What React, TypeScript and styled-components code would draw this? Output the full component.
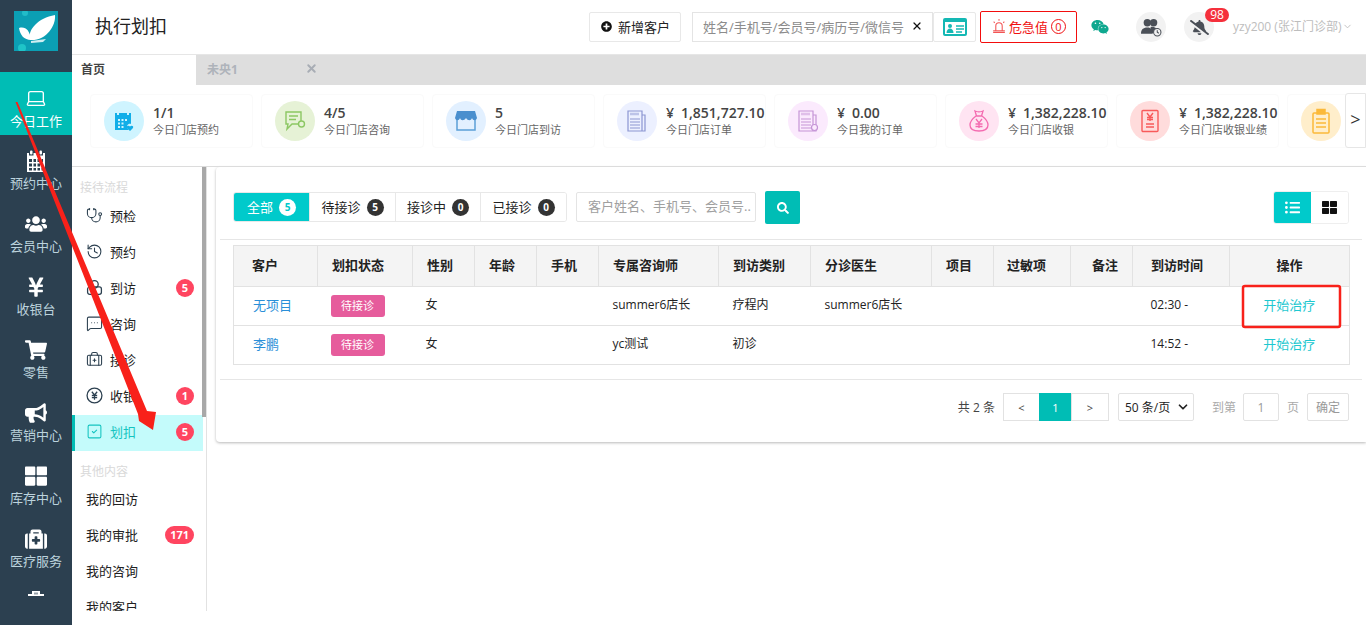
import { ReactNode } from 'react';
import styled, { createGlobalStyle } from 'styled-components';
import {
  FaBullhorn,
  FaMedkit,
  FaPlusCircle,
  FaSearch,
  FaShoppingCart,
  FaThLarge,
  FaUsers,
  FaWeixin,
  FaYenSign,
  FaBellSlash,
  FaListUl,
} from 'react-icons/fa';
import {
  BriefcaseMedical,
  ChevronDown,
  History,
  Laptop,
  MessageSquareMore,
  SquareCheck,
  Stethoscope,
  X,
} from 'lucide-react';

const GlobalStyle = createGlobalStyle`
  html, body {
    margin: 0;
    padding: 0;
    background: #fff;
    font-family: "Open Sans", "Noto Sans CJK SC", sans-serif;
    color: #222;
  }
  * {
    box-sizing: border-box;
  }
`;

const Page = styled.div`
  position: relative;
  display: flex;
  width: 1366px;
  height: 625px;
  overflow: hidden;
`;

const SideNav = styled.nav`
  width: 72px;
  height: 625px;
  flex: none;
  background: #2c4050;
  overflow: hidden;
`;

const LogoBox = styled.div`
  height: 72px;
  padding: 11px 14px 0;
  svg {
    display: block;
  }
`;

const NavItem = styled.div<{ $active?: boolean }>`
  height: 63px;
  display: flex;
  flex-direction: column;
  align-items: center;
  padding-top: 15px;
  background: ${(p) => (p.$active ? '#00bdb5' : 'transparent')};
  color: #fff;
  span {
    margin-top: ${(p) => (p.$active ? 3 : 2)}px;
    font-size: 13px;
    line-height: 18px;
    color: ${(p) => (p.$active ? '#fff' : '#bcd3dd')};
  }
  svg {
    display: block;
    width: 22px;
    height: 22px;
  }
`;

const NavClipped = styled.div`
  height: 10px;
  margin-top: 15px;
  display: flex;
  justify-content: center;
  overflow: hidden;
`;

const Right = styled.div`
  width: 1294px;
  display: flex;
  flex-direction: column;
`;

const Header = styled.header`
  height: 55px;
  display: flex;
  align-items: center;
  border-bottom: 1px solid #e6e6e6;
`;

const Title = styled.h1`
  margin: 0 0 4px 23px;
  width: 494px;
  font-size: 18px;
  font-weight: 400;
  color: #222;
`;

const AddButton = styled.div`
  width: 92px;
  height: 30px;
  display: flex;
  align-items: center;
  padding: 0 0 2px 11px;
  gap: 6px;
  border: 1px solid #e8e8e8;
  border-radius: 2px;
  font-size: 13px;
  color: #222;
`;

const SearchBox = styled.div`
  width: 241px;
  height: 30px;
  margin-left: 11px;
  padding: 0 9px 2px 10px;
  display: flex;
  align-items: center;
  justify-content: space-between;
  border: 1px solid #e4e4e4;
  font-size: 13px;
  color: #8c8c8c;
  svg {
    color: #111;
  }
`;

const CardButton = styled.div`
  width: 43px;
  height: 30px;
  margin-bottom: 1px;
  display: flex;
  align-items: center;
  justify-content: center;
  border: 1px solid #e8e8e8;
  border-radius: 2px;
`;

const AlarmButton = styled.div`
  width: 97px;
  height: 32px;
  margin-left: 4px;
  padding-bottom: 2px;
  display: flex;
  align-items: center;
  justify-content: center;
  gap: 2px;
  border: 1px solid #f30d0d;
  border-radius: 2px;
  font-size: 13px;
  color: #f01010;
  b {
    width: 15px;
    height: 15px;
    margin-left: 1px;
    border: 1px solid #f01010;
    border-radius: 50%;
    font-size: 11px;
    line-height: 13px;
    font-weight: 400;
    text-align: center;
  }
`;

const WechatIcon = styled(FaWeixin)`
  margin-left: 14px;
  width: 18px;
  height: 18px;
  color: #0fa88f;
`;

const RoundIcon = styled.div<{ $gap: number }>`
  position: relative;
  width: 30px;
  height: 30px;
  margin-left: ${(p) => p.$gap}px;
  border-radius: 50%;
  background: #f2f2f2;
  color: #4a4f57;
  display: flex;
  align-items: center;
  justify-content: center;
`;

const CountBadge = styled.span`
  position: absolute;
  left: 21px;
  top: -4px;
  width: 24px;
  height: 14px;
  border-radius: 7px;
  background: #f5303c;
  color: #fff;
  font-size: 12px;
  line-height: 14px;
  text-align: center;
`;

const UserName = styled.div`
  margin-left: 19px;
  padding-bottom: 2px;
  display: flex;
  align-items: center;
  gap: 1px;
  font-size: 12px;
  color: #bdbdbd;
  white-space: nowrap;
`;

const TabBar = styled.div`
  height: 30px;
  display: flex;
  background: #dedede;
  font-size: 12px;
  font-weight: 700;
`;

const Tab = styled.div<{ $current?: boolean }>`
  width: ${(p) => (p.$current ? 124 : 128)}px;
  padding: 0 0 3px ${(p) => (p.$current ? 9 : 11)}px;
  display: flex;
  align-items: center;
  justify-content: space-between;
  background: ${(p) => (p.$current ? '#fff' : 'transparent')};
  color: ${(p) => (p.$current ? '#444' : '#aeb3ba')};
  svg {
    color: #a8adb5;
    margin-right: 6px;
  }
`;

const StatRow = styled.div`
  position: relative;
  height: 82px;
  padding: 9px 0 0 18px;
  display: flex;
  border-bottom: 1px solid #dcdcdc;
  overflow: hidden;
`;

const StatCard = styled.div`
  width: 163px;
  height: 54px;
  margin-right: 8px;
  flex: none;
  padding: 6px 0 0 13px;
  display: flex;
  border: 1px solid #fafafa;
  border-radius: 4px;
`;

const StatCircle = styled.div<{ $bg: string }>`
  width: 40px;
  height: 40px;
  flex: none;
  display: flex;
  align-items: center;
  justify-content: center;
  border-radius: 50%;
  background: ${(p) => p.$bg};
`;

const StatText = styled.div`
  margin-left: 9px;
  padding-top: 3px;
  white-space: nowrap;
`;

const StatValue = styled.div`
  font-size: 14px;
  line-height: 18px;
  font-weight: 600;
  color: #444;
`;

const StatLabel = styled.div`
  padding-top: 1px;
  font-size: 11px;
  line-height: 14px;
  color: #666;
`;

const NextButton = styled.div`
  position: absolute;
  right: 0;
  top: 8px;
  width: 21px;
  height: 55px;
  padding-bottom: 3px;
  display: flex;
  align-items: center;
  justify-content: center;
  background: #fff;
  border: 1px solid #e6e6e6;
  border-radius: 3px 0 0 3px;
  font-size: 18px;
  color: #333;
`;

const Body = styled.div`
  display: flex;
`;

const Panel = styled.aside`
  position: relative;
  width: 135px;
  height: 444px;
  flex: none;
  padding-top: 12px;
  border-right: 1px solid #e2e2e2;
  overflow: hidden;
`;

const PanelThumb = styled.div`
  position: absolute;
  right: 0;
  top: 0;
  width: 4px;
  height: 250px;
  background: #a8a8a8;
`;

const GroupLabel = styled.div<{ $gap?: number }>`
  height: 18px;
  margin-top: ${(p) => p.$gap ?? 0}px;
  margin-bottom: ${(p) => (p.$gap ? 1 : 2)}px;
  padding-left: 8px;
  font-size: 12px;
  line-height: 18px;
  color: #d9d9d9;
`;

const MenuItem = styled.div<{ $active?: boolean }>`
  width: 131px;
  height: 36px;
  display: flex;
  align-items: center;
  padding: 0 9px 3px ${(p) => (p.$active ? 11 : 14)}px;
  border-left: ${(p) => (p.$active ? '3px solid #00bdb5' : 'none')};
  background: ${(p) => (p.$active ? '#c4fbfb' : 'transparent')};
  color: ${(p) => (p.$active ? '#14c4c0' : '#222')};
  font-size: 13px;
  svg {
    flex: none;
    width: 17px;
    height: 17px;
    margin-right: 7px;
    color: ${(p) => (p.$active ? '#14c4c0' : '#2c4050')};
  }
`;

const MenuText = styled.span`
  flex: 1;
`;

const PlainMenuItem = styled(MenuItem)`
  padding-left: 14px;
`;

const RedBadge = styled.span`
  min-width: 18px;
  height: 18px;
  padding: 0 5px;
  border-radius: 9px;
  background: #ff4560;
  color: #fff;
  font-size: 11px;
  line-height: 18px;
  font-weight: 700;
  text-align: center;
`;

const Card = styled.main`
  width: 1150px;
  height: 275px;
  margin-left: 9px;
  border-radius: 4px 0 0 4px;
  box-shadow: 0 1px 3px rgba(0, 0, 0, 0.28);
`;

const Toolbar = styled.div`
  height: 73px;
  margin: 0 4px;
  padding: 25px 13px 0;
  display: flex;
  align-items: flex-start;
  border-bottom: 1px solid #e6e6e6;
`;

const FilterGroup = styled.div`
  display: flex;
  height: 30px;
  border: 1px solid #e8e8e8;
  border-radius: 3px;
  overflow: hidden;
`;

const FilterTab = styled.div<{ $on?: boolean; $width: number }>`
  width: ${(p) => p.$width}px;
  padding-bottom: 2px;
  display: flex;
  align-items: center;
  justify-content: center;
  gap: 6px;
  font-size: 13px;
  background: ${(p) => (p.$on ? '#00cacb' : '#fff')};
  color: ${(p) => (p.$on ? '#fff' : '#222')};
  border-right: 1px solid #e8e8e8;
  &:last-child {
    border-right: none;
  }
  b {
    width: 17px;
    height: 17px;
    margin-top: 2px;
    border-radius: 50%;
    background: ${(p) => (p.$on ? '#fff' : '#333')};
    color: ${(p) => (p.$on ? '#00cacb' : '#fff')};
    font-size: 10px;
    line-height: 17px;
    text-align: center;
  }
`;

const SearchInput = styled.div`
  width: 180px;
  height: 30px;
  margin-left: 9px;
  padding-left: 11px;
  border: 1px solid #e4e4e4;
  border-radius: 2px;
  font-size: 13px;
  line-height: 26px;
  color: #a0a0a0;
  white-space: nowrap;
  overflow: hidden;
`;

const SearchButton = styled.div`
  width: 35px;
  height: 33px;
  margin: -1px 0 0 9px;
  display: flex;
  align-items: center;
  justify-content: center;
  background: #00bdb5;
  border-radius: 2px;
  color: #fff;
`;

const ViewToggle = styled.div`
  margin-left: auto;
  margin-top: -1px;
  display: flex;
  height: 33px;
  border: 1px solid #eee;
  border-radius: 3px;
  overflow: hidden;
`;

const ViewButton = styled.div<{ $on?: boolean }>`
  width: 37px;
  display: flex;
  align-items: center;
  justify-content: center;
  background: ${(p) => (p.$on ? '#00cacb' : '#fff')};
  color: ${(p) => (p.$on ? '#fff' : '#111')};
`;

const TableWrap = styled.div`
  margin: 5px 17px 0;
`;

const Table = styled.table`
  width: 1116px;
  table-layout: fixed;
  border-collapse: collapse;
  border: 1px solid #e2e2e2;
`;

const Th = styled.th<{ $pad?: number; $align?: string }>`
  height: 41px;
  padding: 0 ${(p) => (p.$align === 'right' ? 14 : 0)}px 4px ${(p) => p.$pad ?? 14}px;
  background: #f4f4f4;
  border-right: 1px solid #e2e2e2;
  border-bottom: 1px solid #e2e2e2;
  font-size: 13px;
  font-weight: 700;
  color: #222;
  text-align: ${(p) => p.$align ?? 'left'};
  &:last-child {
    padding: 0 0 4px;
    border-right: none;
  }
`;

const Td = styled.td<{ $pad?: number }>`
  height: 39px;
  padding: 0 0 4px ${(p) => p.$pad ?? 14}px;
  border-bottom: 1px solid #e2e2e2;
  font-size: 12px;
  color: #222;
  white-space: nowrap;
  tr:last-child & {
    border-bottom: none;
  }
`;

const TagCell = styled(Td)`
  padding-bottom: 1px;
`;

const NameLink = styled.span`
  font-size: 13px;
  color: #2a8fd8;
`;

const StatusTag = styled.span`
  display: block;
  width: 54px;
  height: 22px;
  border-radius: 3px;
  background: #e65c9c;
  color: #fff;
  font-size: 11px;
  line-height: 21px;
  text-align: center;
`;

const ActionLink = styled.div`
  font-size: 13px;
  color: #1ec8d0;
  text-align: center;
`;

const Pagination = styled.div`
  margin: 14px 4px 0;
  padding: 13px 13px 0 0;
  display: flex;
  justify-content: flex-end;
  align-items: center;
  border-top: 1px solid #e6e6e6;
  font-size: 12px;
  color: #444;
`;

const Total = styled.span`
  margin-right: 9px;
`;

const PageButton = styled.div<{ $on?: boolean; $width: number }>`
  width: ${(p) => p.$width}px;
  height: 28px;
  display: flex;
  align-items: center;
  justify-content: center;
  margin-left: -1px;
  font-size: 11px;
  background: ${(p) => (p.$on ? '#00bdb5' : '#fff')};
  color: ${(p) => (p.$on ? '#fff' : '#444')};
  border: 1px solid ${(p) => (p.$on ? '#00bdb5' : '#e2e2e2')};
`;

const SizeSelect = styled.div`
  width: 76px;
  height: 28px;
  margin: 0 18px 0 9px;
  padding: 0 3px 0 6px;
  display: flex;
  align-items: center;
  justify-content: space-between;
  border: 1px solid #e2e2e2;
  border-radius: 2px;
  color: #222;
`;

const MutedText = styled.span<{ $left?: number; $right: number }>`
  margin: 0 ${(p) => p.$right}px 0 ${(p) => p.$left ?? 0}px;
  color: #aaa;
`;

const JumpBox = styled.div<{ $width: number }>`
  width: ${(p) => p.$width}px;
  height: 28px;
  display: flex;
  align-items: center;
  justify-content: center;
  border: 1px solid #e2e2e2;
  border-radius: 2px;
  color: #999;
`;

const Annotation = styled.svg`
  position: absolute;
  left: 0;
  top: 0;
  pointer-events: none;
`;

const Calendar = () => (
  <svg viewBox="0 0 22 22" fill="#fff">
    <rect x="5" y="0.5" width="2.5" height="4" rx="1" />
    <rect x="14.5" y="0.5" width="2.5" height="4" rx="1" />
    <path
      fillRule="evenodd"
      d="M2 3h2v2.500h4.500V3h5v2.500H18V3h2v19H2zM4 9v3h3V9zm4.500 0v3H11V9zm4 0v3H15V9zm4 0v3h1.500V9zM4 13.500v3h3v-3zm4.500 0v3H11v-3zm4 0v3H15v-3zm4 0v3h1.500v-3zM4 18v2.500h3V18zm4.500 0v2.500H11V18zm4 0v2.500H15V18zm4 0v2.500h1.500V18z"
    />
  </svg>
);

const LogoMark = () => (
  <svg width="44" height="40" viewBox="0 0 44 40">
    <rect width="44" height="40" fill="#0b9fb4" />
    <circle cx="11" cy="2" r="3" fill="#22bcc8" />
    <circle cx="8" cy="37" r="4" fill="#1fc4c8" />
    <path d="M16 29C13 19 24 7 41 4c1 11-9 26-25 25z" fill="#fff" />
    <path d="M5 17c6-2 11 2 12 12-7 0-11-5-12-12z" fill="#fff" />
    <path d="M17 30l15-2-3 3-12 1z" fill="#cfeef2" />
  </svg>
);

const VisitIcon = () => (
  <svg viewBox="0 0 16 16" fill="none" stroke="currentColor" strokeWidth="1.2">
    <circle cx="8" cy="5" r="3.500" />
    <rect x="1.500" y="7.500" width="13" height="7" rx="2" />
  </svg>
);

const CashIcon = () => (
  <svg viewBox="0 0 16 16" fill="none" stroke="currentColor" strokeWidth="1.2">
    <circle cx="8" cy="8" r="7" />
    <path d="M5.500 4.500 8 7.500l2.500-3M8 7.500V12M5.500 8h5M5.500 10h5" />
  </svg>
);

const IdCardIcon = () => (
  <svg width="24" height="18" viewBox="0 0 24 18">
    <rect x="1" y="1" width="22" height="16" rx="1" fill="none" stroke="#14b8b4" strokeWidth="2" />
    <rect x="1" y="1" width="22" height="3" fill="#14b8b4" />
    <circle cx="7" cy="8" r="2" fill="#14b8b4" />
    <path d="M3.500 15c0-6 7-6 7 0z" fill="#14b8b4" />
    <path d="M13 8h8M13 11h8M13 14h6" stroke="#14b8b4" strokeWidth="1.300" />
  </svg>
);

const SirenIcon = () => (
  <svg width="16" height="16" viewBox="0 0 15 15" fill="none" stroke="#f25555" strokeWidth="1">
    <path d="M4.500 12V7.500a3 3 0 0 1 6 0V12M2 13.500h11M7.500 1v1.500M2.500 3.500l1 1M12.500 3.500l-1 1M2 12h11" />
  </svg>
);

const PeopleClock = () => (
  <svg width="21" height="19" viewBox="0 0 20 18" fill="#4a4f57">
    <circle cx="6" cy="4.500" r="3.500" />
    <circle cx="12" cy="4.500" r="3.500" />
    <path d="M0 15c0-4 2-6 6-6s5 2 5 6zM9 8.500c3-.5 6 .5 6.500 3.500-2.500 0-4 1-4.500 3H10c0-2.500-.5-5-1-6.500z" />
    <circle cx="15.500" cy="13.500" r="3.500" fill="#f2f2f2" stroke="#4a4f57" />
    <path d="M15.500 11.500v2l1.500 1" stroke="#4a4f57" fill="none" />
  </svg>
);

const CalendarHeart = () => (
  <svg width="22" height="22" viewBox="0 0 22 22">
    <path
      fill="#12aee8"
      fillRule="evenodd"
      d="M2 3h2v2h2V3h8v2h2V3h2v11c-3-1-5 2-3 5l1 1H2zm3 6v2h2V9zm3.500 0v2h2V9zm3.500 0v2h2V9zm-7 3.500v2h2v-2zm3.500 0v2h2v-2zM5 16v2h2v-2zm3.500 0v2h2v-2z"
    />
    <path fill="#12aee8" d="M17 21l-3-3c-1-2 1.500-3 3-1.500 1.500-1.500 4-.5 3 1.500z" />
  </svg>
);

const ChatIcon = () => (
  <svg width="24" height="22" viewBox="0 0 24 22" fill="none" stroke="#8cc763" strokeWidth="1.400">
    <path d="M15 14H9l-5 5 1-5H3V2h15v9" />
    <path d="M6 6h9M6 9.500h7" />
    <circle cx="18.500" cy="14" r="3" />
  </svg>
);

const ShopIcon = () => (
  <svg width="24" height="22" viewBox="0 0 24 22">
    <path d="M3 9v11h18V9" fill="none" stroke="#5b9fd8" strokeWidth="1.500" />
    <path d="M3 1h18l2 7c-1 3-4 3-5 0-1 3-4 3-6 0-2 3-5 3-6 0-1 3-4 3-5 0z" fill="#4a8fce" />
  </svg>
);

const NewsIcon = ({ color, badge }: { color: string; badge?: boolean }) => (
  <svg width="24" height="24" viewBox="0 0 24 24" fill="none" stroke={color} strokeWidth="1.200">
    <path d="M3 2h14v20H3zM17 6h3v16h-3" />
    <path d="M5 10h10M5 13h10M5 16h10M5 19h10" />
    <path d="M5 5h9" strokeWidth="2.500" opacity="0.5" />
    {badge && <circle cx="18.500" cy="18.500" r="3" fill="#fbeafd" />}
  </svg>
);

const MoneyBag = () => (
  <svg width="24" height="24" viewBox="0 0 24 24" fill="none" stroke="#f46bb0" strokeWidth="1.300">
    <path d="M8 2c2 1 6 1 8 0l-1.500 5h-5zM9 7C5 10 3 13 3 16c0 4 4 6 9 6s9-2 9-6c0-3-2-6-6-9" />
    <path d="M9 10l3 4 3-4M12 14v5M8.500 15h7M8.500 17.500h7" />
  </svg>
);

const ReceiptIcon = () => (
  <svg width="22" height="24" viewBox="0 0 22 24" fill="none" stroke="#f85a5a" strokeWidth="1.400">
    <rect x="3" y="1.500" width="16" height="21" rx="1" />
    <path d="M8 4l3 4 3-4M11 8v4M8 8.500h6M8 10.500h6M7 15h8M7 18h8" />
  </svg>
);

const ClipboardIcon = () => (
  <svg width="22" height="26" viewBox="0 0 22 26" fill="none" stroke="#fbb93a" strokeWidth="1.500">
    <rect x="3" y="5" width="16" height="20" rx="1" />
    <path d="M7 1.500h8V6H7z" fill="#fbb93a" />
    <path d="M6 11h10M6 15h10M6 19h10" />
  </svg>
);

const StatItem = ({ bg, icon, value, label }: { bg: string; icon: ReactNode; value: string; label: string }) => (
  <StatCard>
    <StatCircle $bg={bg}>{icon}</StatCircle>
    <StatText>
      <StatValue>{value}</StatValue>
      <StatLabel>{label}</StatLabel>
    </StatText>
  </StatCard>
);

const columns = [84, 95, 62, 62, 62, 120, 92, 121, 62, 77, 62, 97, 120];

const App = () => (
  <Page>
    <GlobalStyle />
    <SideNav>
      <LogoBox>
        <LogoMark />
      </LogoBox>
      <NavItem $active>
        <Laptop strokeWidth={1.5} />
        <span>今日工作</span>
      </NavItem>
      <NavItem>
        <Calendar />
        <span>预约中心</span>
      </NavItem>
      <NavItem>
        <FaUsers />
        <span>会员中心</span>
      </NavItem>
      <NavItem>
        <FaYenSign />
        <span>收银台</span>
      </NavItem>
      <NavItem>
        <FaShoppingCart />
        <span>零售</span>
      </NavItem>
      <NavItem>
        <FaBullhorn />
        <span>营销中心</span>
      </NavItem>
      <NavItem>
        <FaThLarge />
        <span>库存中心</span>
      </NavItem>
      <NavItem>
        <FaMedkit />
        <span>医疗服务</span>
      </NavItem>
      <NavClipped>
        <svg width="18" height="10" viewBox="0 0 18 10" fill="#fff">
          <path d="M5 0h8v3h4v2H1V3h4zM7.500 1.500v2h1v-2zm2 0v2h1v-2z" fillRule="evenodd" />
        </svg>
      </NavClipped>
    </SideNav>

    <Right>
      <Header>
        <Title>执行划扣</Title>
        <AddButton>
          <FaPlusCircle size={11} color="#111" />
          新增客户
        </AddButton>
        <SearchBox>
          姓名/手机号/会员号/病历号/微信号
          <X size={12} strokeWidth={2.5} />
        </SearchBox>
        <CardButton>
          <IdCardIcon />
        </CardButton>
        <AlarmButton>
          <SirenIcon />
          危急值
          <b>0</b>
        </AlarmButton>
        <WechatIcon />
        <RoundIcon $gap={27}>
          <PeopleClock />
        </RoundIcon>
        <RoundIcon $gap={18}>
          <FaBellSlash size={19} />
          <CountBadge>98</CountBadge>
        </RoundIcon>
        <UserName>
          yzy200 (张江门诊部)
          <ChevronDown size={11} />
        </UserName>
      </Header>

      <TabBar>
        <Tab $current>首页</Tab>
        <Tab>
          未央1
          <X size={13} strokeWidth={3.5} />
        </Tab>
      </TabBar>

      <StatRow>
        <StatItem bg="#cff4ff" icon={<CalendarHeart />} value="1/1" label="今日门店预约" />
        <StatItem bg="#e6f2d6" icon={<ChatIcon />} value="4/5" label="今日门店咨询" />
        <StatItem bg="#e2f0ff" icon={<ShopIcon />} value="5" label="今日门店到访" />
        <StatItem bg="#ecf0ff" icon={<NewsIcon color="#8c96d2" />} value={'¥\u20021,851,727.10'} label="今日门店订单" />
        <StatItem bg="#fbeafd" icon={<NewsIcon color="#c594d6" badge />} value={'¥\u20020.00'} label="今日我的订单" />
        <StatItem bg="#ffe4f2" icon={<MoneyBag />} value={'¥\u20021,382,228.10'} label="今日门店收银" />
        <StatItem bg="#ffdcdc" icon={<ReceiptIcon />} value={'¥\u20021,382,228.10'} label="今日门店收银业绩" />
        <StatItem bg="#ffeecb" icon={<ClipboardIcon />} value="" label="" />
        <NextButton>&gt;</NextButton>
      </StatRow>

      <Body>
        <Panel>
          <PanelThumb />
          <GroupLabel>接待流程</GroupLabel>
          <MenuItem>
            <Stethoscope strokeWidth={1.5} />
            <MenuText>预检</MenuText>
          </MenuItem>
          <MenuItem>
            <History strokeWidth={1.5} />
            <MenuText>预约</MenuText>
          </MenuItem>
          <MenuItem>
            <VisitIcon />
            <MenuText>到访</MenuText>
            <RedBadge>5</RedBadge>
          </MenuItem>
          <MenuItem>
            <MessageSquareMore strokeWidth={1.5} />
            <MenuText>咨询</MenuText>
          </MenuItem>
          <MenuItem>
            <BriefcaseMedical strokeWidth={1.5} />
            <MenuText>接诊</MenuText>
          </MenuItem>
          <MenuItem>
            <CashIcon />
            <MenuText>收银</MenuText>
            <RedBadge>1</RedBadge>
          </MenuItem>
          <MenuItem $active>
            <SquareCheck strokeWidth={1.5} />
            <MenuText>划扣</MenuText>
            <RedBadge>5</RedBadge>
          </MenuItem>
          <GroupLabel $gap={12}>其他内容</GroupLabel>
          <PlainMenuItem>
            <MenuText>我的回访</MenuText>
          </PlainMenuItem>
          <PlainMenuItem>
            <MenuText>我的审批</MenuText>
            <RedBadge>171</RedBadge>
          </PlainMenuItem>
          <PlainMenuItem>
            <MenuText>我的咨询</MenuText>
          </PlainMenuItem>
          <PlainMenuItem>
            <MenuText>我的客户</MenuText>
          </PlainMenuItem>
        </Panel>

        <Card>
          <Toolbar>
            <FilterGroup>
              <FilterTab $on $width={76}>
                全部<b>5</b>
              </FilterTab>
              <FilterTab $width={86}>
                待接诊<b>5</b>
              </FilterTab>
              <FilterTab $width={85}>
                接诊中<b>0</b>
              </FilterTab>
              <FilterTab $width={85}>
                已接诊<b>0</b>
              </FilterTab>
            </FilterGroup>
            <SearchInput>客户姓名、手机号、会员号..</SearchInput>
            <SearchButton>
              <FaSearch size={12} />
            </SearchButton>
            <ViewToggle>
              <ViewButton $on>
                <FaListUl size={15} />
              </ViewButton>
              <ViewButton>
                <FaThLarge size={15} />
              </ViewButton>
            </ViewToggle>
          </Toolbar>

          <TableWrap>
            <Table>
              <colgroup>
                {columns.map((w, i) => (
                  <col key={i} width={w} />
                ))}
              </colgroup>
              <thead>
                <tr>
                  <Th $pad={18}>客户</Th>
                  <Th>划扣状态</Th>
                  <Th>性别</Th>
                  <Th>年龄</Th>
                  <Th>手机</Th>
                  <Th>专属咨询师</Th>
                  <Th>到访类别</Th>
                  <Th>分诊医生</Th>
                  <Th>项目</Th>
                  <Th $pad={13}>过敏项</Th>
                  <Th $align="right">备注</Th>
                  <Th $pad={18}>到访时间</Th>
                  <Th $align="center">操作</Th>
                </tr>
              </thead>
              <tbody>
                <tr>
                  <Td $pad={19}>
                    <NameLink>无项目</NameLink>
                  </Td>
                  <TagCell $pad={13}>
                    <StatusTag>待接诊</StatusTag>
                  </TagCell>
                  <Td $pad={13}>女</Td>
                  <Td />
                  <Td />
                  <Td>summer6店长</Td>
                  <Td>疗程内</Td>
                  <Td>summer6店长</Td>
                  <Td />
                  <Td />
                  <Td />
                  <Td $pad={18}>02:30 -</Td>
                  <Td $pad={0}>
                    <ActionLink>开始治疗</ActionLink>
                  </Td>
                </tr>
                <tr>
                  <Td $pad={19}>
                    <NameLink>李鹏</NameLink>
                  </Td>
                  <TagCell $pad={13}>
                    <StatusTag>待接诊</StatusTag>
                  </TagCell>
                  <Td $pad={13}>女</Td>
                  <Td />
                  <Td />
                  <Td>yc测试</Td>
                  <Td>初诊</Td>
                  <Td />
                  <Td />
                  <Td />
                  <Td />
                  <Td $pad={18}>14:52 -</Td>
                  <Td $pad={0}>
                    <ActionLink>开始治疗</ActionLink>
                  </Td>
                </tr>
              </tbody>
            </Table>
          </TableWrap>

          <Pagination>
            <Total>共 2 条</Total>
            <PageButton $width={37}>&lt;</PageButton>
            <PageButton $on $width={33}>
              1
            </PageButton>
            <PageButton $width={38}>&gt;</PageButton>
            <SizeSelect>
              50 条/页
              <ChevronDown size={14} strokeWidth={3} />
            </SizeSelect>
            <MutedText $right={7}>到第</MutedText>
            <JumpBox $width={36}>1</JumpBox>
            <MutedText $left={8} $right={8}>
              页
            </MutedText>
            <JumpBox $width={42}>确定</JumpBox>
          </Pagination>
        </Card>
      </Body>
    </Right>

    <Annotation width="1366" height="625" viewBox="0 0 1366 625">
      <polygon points="15.500,102 17.500,102 147,411 156,412 153,430 139,421 138,414" fill="#f8211a" />
      <rect x="1243" y="286" width="97" height="41" rx="2" fill="none" stroke="#f8211a" strokeWidth="2.500" />
    </Annotation>
  </Page>
);

export default App;
